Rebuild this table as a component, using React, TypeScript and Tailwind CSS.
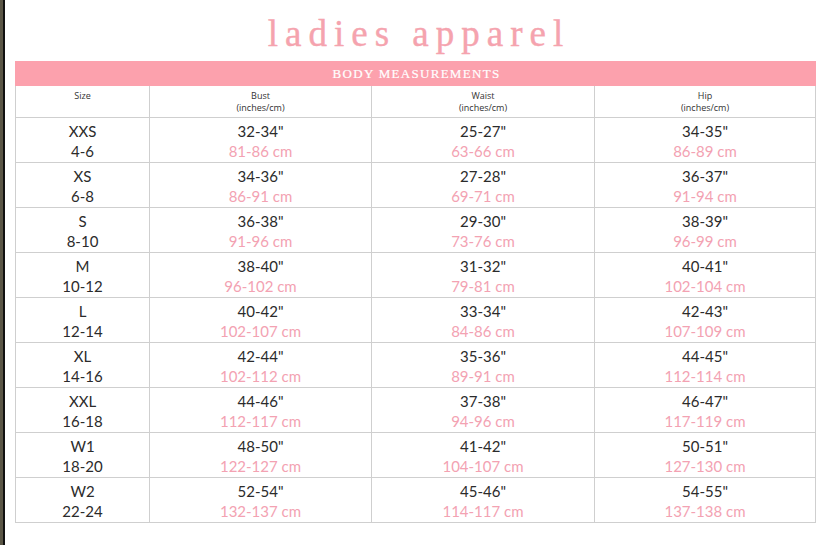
import React from "react";

const rows = [
  ["XXS", "4-6", '32-34"', "81-86 cm", '25-27"', "63-66 cm", '34-35"', "86-89 cm"],
  ["XS", "6-8", '34-36"', "86-91 cm", '27-28"', "69-71 cm", '36-37"', "91-94 cm"],
  ["S", "8-10", '36-38"', "91-96 cm", '29-30"', "73-76 cm", '38-39"', "96-99 cm"],
  ["M", "10-12", '38-40"', "96-102 cm", '31-32"', "79-81 cm", '40-41"', "102-104 cm"],
  ["L", "12-14", '40-42"', "102-107 cm", '33-34"', "84-86 cm", '42-43"', "107-109 cm"],
  ["XL", "14-16", '42-44"', "102-112 cm", '35-36"', "89-91 cm", '44-45"', "112-114 cm"],
  ["XXL", "16-18", '44-46"', "112-117 cm", '37-38"', "94-96 cm", '46-47"', "117-119 cm"],
  ["W1", "18-20", '48-50"', "122-127 cm", '41-42"', "104-107 cm", '50-51"', "127-130 cm"],
  ["W2", "22-24", '52-54"', "132-137 cm", '45-46"', "114-117 cm", '54-55"', "137-138 cm"],
];

const cell = "border-r border-b border-[#cfcfcf] text-center";
const grid = "grid grid-cols-[135px_222px_223px_221px]";

export default function App() {
  return (
    <div className="flex w-[821px] h-[545px] bg-white overflow-hidden">
      <div className="w-[3px] h-full bg-[#5a5646]" />
      <div className="w-[2px] h-full bg-[#111]" />
      <div className="flex flex-col pl-[10px]">
        <div
          className="h-[61px] w-[801px] flex justify-center pt-[12px] pl-[7px] text-[37px] leading-[44px] tracking-[7px] text-[#f5a3ae]"
          style={{ fontFamily: '"Liberation Serif", "DejaVu Serif", serif', WebkitTextStroke: "0.4px #f5a3ae" }}
        >
          ladies apparel
        </div>
        <div
          className="h-[25px] w-[801px] bg-[#fca1ad] flex items-center justify-center pl-[2px] text-white text-[13px] tracking-[1.3px]"
          style={{ fontFamily: '"Liberation Serif", "DejaVu Serif", serif', WebkitTextStroke: "0.2px #fff" }}
        >
          BODY MEASUREMENTS
        </div>
        <div
          className={`${grid} text-[#333] text-[9px] leading-[12px]`}
          style={{ fontFamily: '"Open Sans", "DejaVu Sans", sans-serif' }}
        >
          <div className={`${cell} border-l h-[32px] pt-[4px]`}>Size</div>
          <div className={`${cell} h-[32px] pt-[4px]`}>
            <div>Bust</div>
            <div>(inches/cm)</div>
          </div>
          <div className={`${cell} h-[32px] pt-[4px]`}>
            <div>Waist</div>
            <div>(inches/cm)</div>
          </div>
          <div className={`${cell} h-[32px] pt-[4px]`}>
            <div>Hip</div>
            <div>(inches/cm)</div>
          </div>
        </div>
        {rows.map((r) => (
          <div
            key={r[0]}
            className={`${grid} text-[15px] leading-[20px]`}
            style={{ fontFamily: 'Lato, "Open Sans", sans-serif' }}
          >
            <div className={`${cell} border-l h-[45px] pt-[3px] text-[#2b2b2b]`}>
              <div>{r[0]}</div>
              <div>{r[1]}</div>
            </div>
            {[2, 4, 6].map((i) => (
              <div key={i} className={`${cell} h-[45px] pt-[3px]`}>
                <div className="text-[#2b2b2b]">{r[i]}</div>
                <div className="text-[#f3a2b2]">{r[i + 1]}</div>
              </div>
            ))}
          </div>
        ))}
      </div>
    </div>
  );
}
